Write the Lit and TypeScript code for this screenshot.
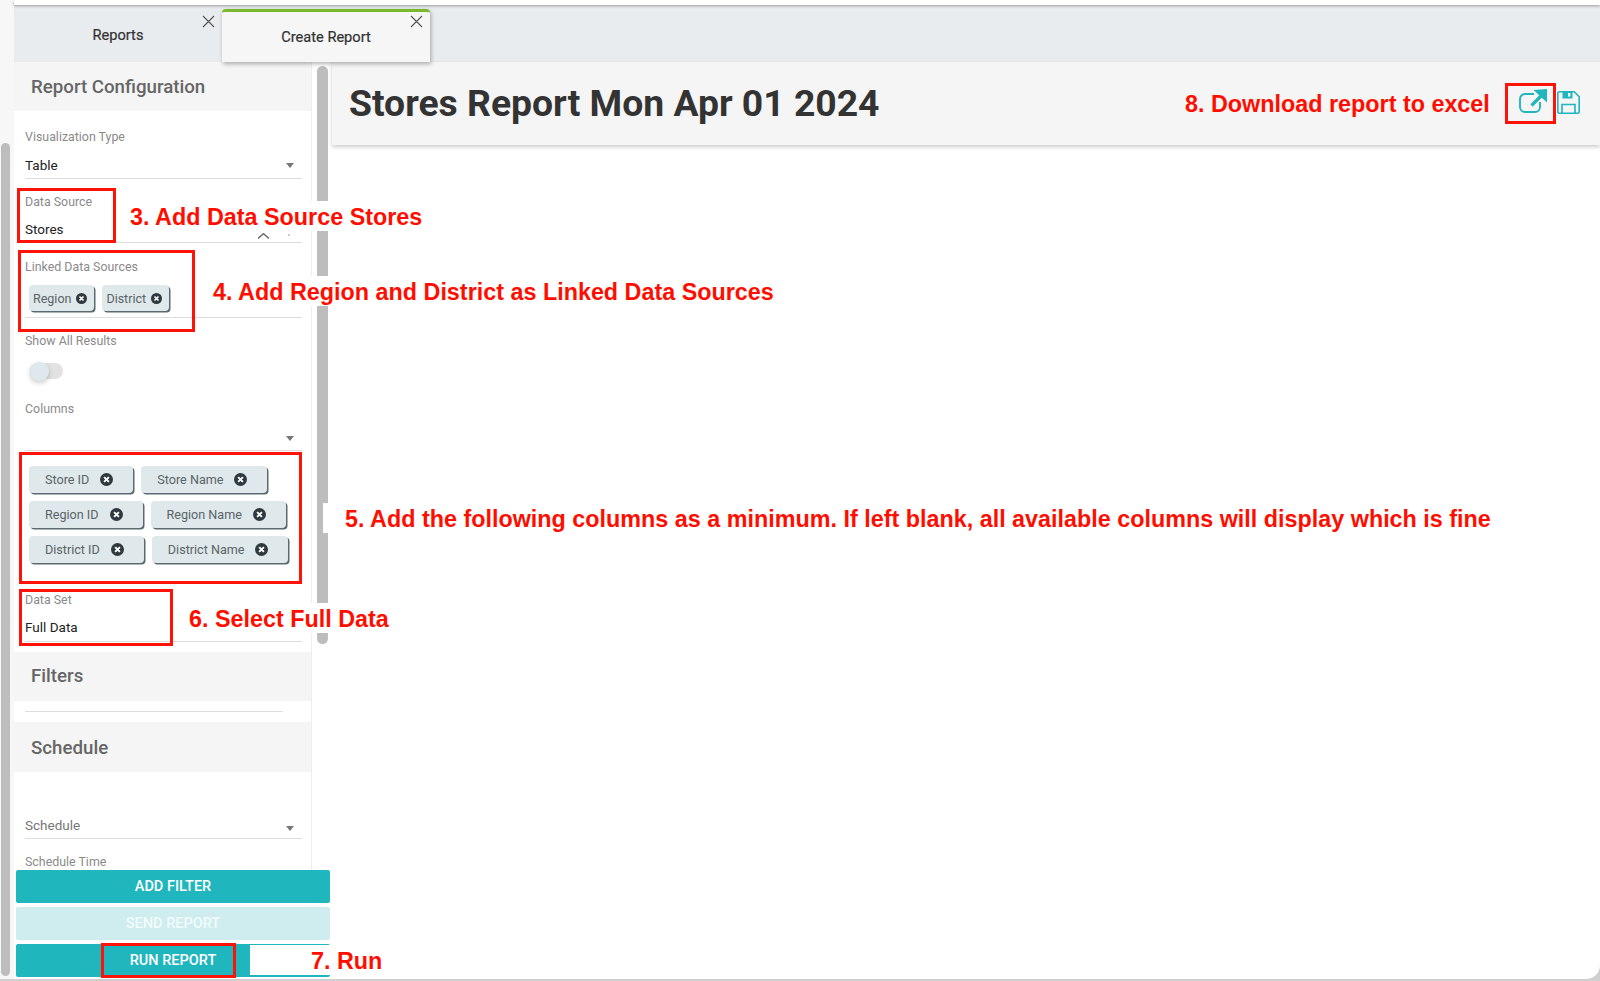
import { LitElement, html, css, svg } from "lit";
import { customElement } from "lit/decorators.js";

const closeCircle = svg`<svg class="cc" viewBox="0 0 24 24"><circle cx="12" cy="12" r="12" fill="#2f3a40"/><path d="M7.6 7.6l8.8 8.8M16.4 7.6l-8.8 8.8" stroke="#fff" stroke-width="3.6" fill="none"/></svg>`;

@customElement("app-root")
export class AppRoot extends LitElement {
  static styles = css`
    :host { display: block; width: 1600px; height: 981px; position: relative; overflow: hidden; background: #cfcfcf; font-family: Roboto, sans-serif; color: #333; }
    .page { display: flex; height: 979px; background: #fff; border-bottom-right-radius: 14px; overflow: hidden; }
    .gutter { width: 14px; flex: none; background: #f7f7f7; padding: 143px 0 0 1px; box-sizing: border-box; }
    .gutter i { display: block; width: 9px; background: #bdbdbd; border-radius: 5px; height: 833px; }
    .main { flex: 1; display: flex; flex-direction: column; min-width: 0; }
    .strip { height: 5px; flex: none; background: #fff; box-shadow: 0 1px 3px rgba(0,0,0,.35); position: relative; z-index: 2; }
    .tabs { height: 57px; flex: none; background: #e9ecef; display: flex; align-items: flex-end; box-sizing: border-box; }
    .tab { width: 208px; height: 53px; position: relative; box-sizing: border-box; display: flex; justify-content: center; font-size: 14.6px; font-weight: 400; color: #333; padding-top: 17px; -webkit-text-stroke: .2px #333; }
    .tab svg { position: absolute; right: 7px; top: 6px; width: 13px; height: 13px; }
    .tab.active { background: #f6f6f6; border-top: 3px solid #7ab82e; border-radius: 4px 4px 0 0; box-shadow: 1px 2px 4px rgba(0,0,0,.3); padding-top: 16px; }
    .tab.active svg { top: 3px; }
    .body { flex: 1; display: flex; min-height: 0; }
    .side { width: 316px; flex: none; display: flex; flex-direction: column; }
    .upper { height: 808px; flex: none; display: flex; overflow: hidden; }
    .panel { width: 298px; flex: none; overflow: hidden; border-right: 1px solid #eee; box-sizing: border-box; }
    .track { flex: 1; background: #fff; border-right: 1px solid #f2f2f2; padding: 4px 2px 0 5px; }
    .track i { display: block; width: 11px; height: 578px; border-radius: 6px; background: #bdbdbd; }
    .head { height: 49px; box-sizing: border-box; background: #f5f5f5; padding-left: 17px; font-size: 18.7px; font-weight: 500; color: #666; display: flex; align-items: center; }
    .form { padding: 0 9px 0 11px; }
    .field { position: relative; border-bottom: 1px solid #ddd; box-sizing: border-box; }
    .lbl { font-size: 12.4px; color: #8a8a8a; line-height: 14px; }
    .val { font-size: 13.5px; color: #222; line-height: 16px; }
    .val.muted { color: #777; }
    .arrow { position: absolute; right: 8px; width: 0; height: 0; border-left: 4.5px solid transparent; border-right: 4.5px solid transparent; border-top: 5px solid #777; }
    .vis { height: 68px; padding-top: 19px; }
    .vis .val { margin-top: 13px; }
    .vis .arrow { top: 52px; }
    .src { height: 64px; padding-top: 16px; }
    .src .val { margin-top: 12px; }
    .src svg { position: absolute; left: 233px; top: 54px; }
    .linked { height: 75px; padding-top: 17px; }
    .linked .chips { margin: 11px 0 0 4px; }
    .show { height: 133px; padding-top: 16px; }
    .show .cols { margin-top: 23px; }
    .show .arrow { top: 118px; }
    .colchips { padding: 15px 0 0 4px; height: 126px; box-sizing: border-box; align-content: flex-start; }
    .set { height: 65px; padding-top: 16px; }
    .set .val { margin-top: 12px; }
    .spaced { margin-top: 10px; }
    .filters-head { padding-bottom: 2px; }
    .sched-head { height: 50px; padding-top: 1px; }
    .rule { height: 11px; width: 258px; }
    .sched { height: 67px; padding-top: 45px; }
    .sched .arrow { top: 54px; }
    .time { margin-top: 17px; line-height: 11px; }
    .chips { display: flex; flex-wrap: wrap; gap: 8px; }
    .chip { display: flex; align-items: center; height: 26px; box-sizing: border-box; background: #dfe8ea; border-radius: 4px; box-shadow: 1.5px 1.5px 0 #5a6a70; font-size: 12.5px; color: #5a6468; padding: 0 7px 0 4px; gap: 5px; }
    .chip .cc { width: 11px; height: 11px; }
    .chip.big { height: 27px; padding: 0 20px 0 16px; gap: 11px; font-size: 12.6px; }
    .chip.big .cc { width: 13px; height: 13px; }
    .toggle { width: 33px; height: 16px; border-radius: 8px; background: #e2e2e2; position: relative; margin-top: 15px; margin-left: 5px; }
    .toggle i { position: absolute; left: 0; top: -1px; width: 19px; height: 19px; border-radius: 50%; background: #dfe8ec; box-shadow: 0 2px 5px rgba(0,0,0,.22); }
    .btns { display: flex; flex-direction: column; gap: 4px; padding: 0 0 0 2px; }
    .btn { height: 33px; box-sizing: border-box; border-radius: 2px; background: #1fb6bd; color: #fff; font-size: 14.5px; font-weight: 500; display: flex; align-items: center; justify-content: center; }
    .btn.off { background: #cfedef; color: #f2fbfb; }
    .content { flex: 1; min-width: 0; padding-left: 2px; }
    .bar { height: 83px; background: #f5f5f5; box-shadow: 0 2px 4px rgba(0,0,0,.2); display: flex; align-items: center; padding: 0 20px 0 17px; }
    h1 { margin: 0; font-size: 37.3px; font-weight: 700; color: #333; line-height: 1; flex: 1; }
    .ext { flex: none; align-self: flex-start; margin: 26px 9px 0 0; }
    .save { flex: none; align-self: flex-start; margin-top: 29px; }
    .note { position: absolute; background: #fff; color: #ff0e00; font: 700 23.35px/33px "Liberation Sans", Arial, sans-serif; white-space: nowrap; height: 30px; padding: 0 6px 0 5px; }
    .note.plain { background: transparent; padding: 0; }
    .n3 { left: 125px; top: 201px; }
    .n4 { left: 208px; top: 276px; }
    .n5 { left: 323px; top: 503px; padding-left: 22px; }
    .n6 { left: 184px; top: 603px; }
    .n7 { left: 250px; top: 945px; padding: 0 30px 0 61px; height: 30px; }
    .n8 { left: 1185px; top: 88px; }
    .box { position: absolute; border: 3px solid #ff1208; box-sizing: border-box; }
    .b1 { left: 17px; top: 188px; width: 99px; height: 55px; }
    .b2 { left: 18px; top: 250px; width: 177px; height: 82px; }
    .b3 { left: 19px; top: 452px; width: 283px; height: 132px; }
    .b4 { left: 19px; top: 589px; width: 154px; height: 57px; }
    .b5 { left: 101px; top: 943px; width: 135px; height: 35px; }
    .b6 { left: 1505px; top: 83px; width: 51px; height: 41px; }
  `;

  private chip(t: string, big = false) {
    return html`<span class="chip ${big ? "big" : ""}">${t}${closeCircle}</span>`;
  }

  render() {
    const x = svg`<svg viewBox="0 0 13 13"><path d="M1 1l11 11M12 1L1 12" stroke="#555" stroke-width="1.1" fill="none"/></svg>`;
    return html`
      <div class="page">
        <div class="gutter"><i></i></div>
        <div class="main">
          <div class="strip"></div>
          <div class="tabs">
            <div class="tab">Reports${x}</div>
            <div class="tab active">Create Report${x}</div>
          </div>
          <div class="body">
            <div class="side">
              <div class="upper">
                <div class="panel">
                  <div class="head">Report Configuration</div>
                  <div class="form">
                    <div class="field vis">
                      <div class="lbl">Visualization Type</div>
                      <div class="val">Table</div>
                      <div class="arrow"></div>
                    </div>
                    <div class="field src">
                      <div class="lbl">Data Source</div>
                      <div class="val">Stores</div>
                      <svg width="36" height="8" viewBox="0 0 36 8"><path d="M0 5.5L5.5 .7 11 5.5" stroke="#666" stroke-width="1.4" fill="none"/><circle cx="31" cy="2" r=".8" fill="#888"/></svg>
                    </div>
                    <div class="field linked">
                      <div class="lbl">Linked Data Sources</div>
                      <div class="chips">${this.chip("Region")}${this.chip("District")}</div>
                    </div>
                    <div class="field show">
                      <div class="lbl">Show All Results</div>
                      <div class="toggle"><i></i></div>
                      <div class="lbl cols">Columns</div>
                      <div class="arrow"></div>
                    </div>
                    <div class="chips colchips">
                      ${this.chip("Store ID", true)}${this.chip("Store Name", true)}
                      ${this.chip("Region ID", true)}${this.chip("Region Name", true)}
                      ${this.chip("District ID", true)}${this.chip("District Name", true)}
                    </div>
                    <div class="field set">
                      <div class="lbl">Data Set</div>
                      <div class="val">Full Data</div>
                    </div>
                  </div>
                  <div class="head spaced filters-head">Filters</div>
                  <div class="form"><div class="field rule"></div></div>
                  <div class="head spaced sched-head">Schedule</div>
                  <div class="form">
                    <div class="field sched">
                      <div class="val muted">Schedule</div>
                      <div class="arrow"></div>
                    </div>
                    <div class="lbl time">Schedule Time</div>
                  </div>
                </div>
                <div class="track"><i></i></div>
              </div>
              <div class="btns">
                <div class="btn">ADD FILTER</div>
                <div class="btn off">SEND REPORT</div>
                <div class="btn">RUN REPORT</div>
              </div>
            </div>
            <div class="content">
              <div class="bar">
                <h1>Stores Report Mon Apr 01 2024</h1>
                <svg class="ext" width="29" height="26" viewBox="0 0 29 26" fill="none" stroke="#1fb6bd">
                  <path d="M15 6H6a5 5 0 0 0-5 5v8a5 5 0 0 0 5 5h10a5 5 0 0 0 5-5v-5" stroke-width="1.9"/>
                  <path d="M12.5 17.5L24 6" stroke-width="3.2"/>
                  <path d="M14.5 2L28 1v13.5z" fill="#1fb6bd" stroke="none"/>
                </svg>
                <svg class="save" width="23" height="23" viewBox="0 0 23 23" fill="none" stroke="#1fb6bd" stroke-width="1.6">
                  <path d="M2.5 .8h14.7l5 5v14.4a2 2 0 0 1-2 2H2.5a1.7 1.7 0 0 1-1.7-1.7V2.5A1.7 1.7 0 0 1 2.5 .8z"/>
                  <path d="M5.5 .8v6.7h10V.8z" fill="#1fb6bd" stroke="none"/>
                  <path d="M11 2h2.4v3.6H11z" fill="#f5f5f5" stroke="none"/>
                  <path d="M5 22.5v-9h13v9"/>
                </svg>
              </div>
            </div>
          </div>
        </div>
      </div>

      <div class="note n3">3. Add Data Source Stores</div>
      <div class="note n4">4. Add Region and District as Linked Data Sources</div>
      <div class="note n5">5. Add the following columns as a minimum. If left blank, all available columns will display which is fine</div>
      <div class="note n6">6. Select Full Data</div>
      <div class="note n7">7. Run</div>
      <div class="note plain n8">8. Download report to excel</div>

      <div class="box b1"></div>
      <div class="box b2"></div>
      <div class="box b3"></div>
      <div class="box b4"></div>
      <div class="box b5"></div>
      <div class="box b6"></div>
    `;
  }
}
